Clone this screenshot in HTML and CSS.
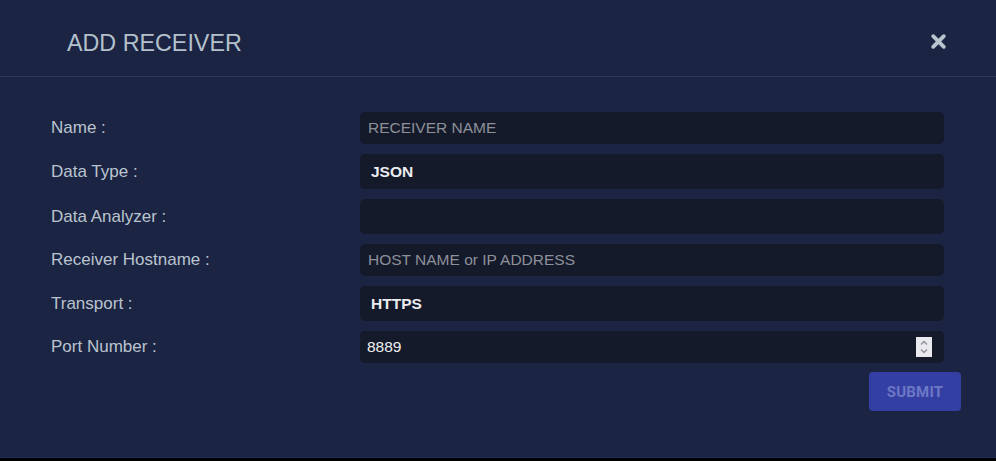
FILE: index.html
```html
<!DOCTYPE html>
<html>
<head>
<meta charset="utf-8">
<link rel="stylesheet" href="styles.css">
</head>
<body>
<div class="modal">
  <header class="modal-header">
    <h1 class="title">ADD RECEIVER</h1>
    <button class="close" aria-label="close">
      <svg width="17" height="17" viewBox="0 0 17 17"><path d="M3.2 3.2 L13.8 13.8 M13.8 3.2 L3.2 13.8" stroke="#b7c5cf" stroke-width="3.8" stroke-linecap="round"/></svg>
    </button>
  </header>
  <div class="modal-body">
    <form class="form">
      <label class="label">Name :</label>
      <div class="field text"><span class="placeholder">RECEIVER NAME</span></div>

      <label class="label">Data Type :</label>
      <div class="field select"><span class="value-bold">JSON</span></div>

      <label class="label">Data Analyzer :</label>
      <div class="field select"></div>

      <label class="label">Receiver Hostname :</label>
      <div class="field text"><span class="placeholder">HOST NAME or IP ADDRESS</span></div>

      <label class="label">Transport :</label>
      <div class="field select"><span class="value-bold">HTTPS</span></div>

      <label class="label">Port Number :</label>
      <div class="field number">
        <span class="value">8889</span>
        <span class="spinner">
          <svg width="16" height="20" viewBox="0 0 16 20"><path d="M5 7.5 L8 4.5 L11 7.5 M5 12.5 L8 15.5 L11 12.5" fill="none" stroke="#8e8f99" stroke-width="1.4"/></svg>
        </span>
      </div>
    </form>
    <div class="actions">
      <button class="submit">SUBMIT</button>
    </div>
  </div>
</div>
</body>
</html>
```
FILE: styles.css
```css
html, body {
  margin: 0;
  padding: 0;
  background: #000;
}
body {
  width: 996px;
  height: 461px;
  overflow: hidden;
  font-family: "Liberation Sans", Arial, sans-serif;
}
.modal {
  height: 458px;
  background: #1c2443;
  border-bottom: 1px solid #232c5a;
  box-sizing: border-box;
}
.modal-header {
  height: 77px;
  box-sizing: border-box;
  border-bottom: 1px solid #2f3859;
  display: flex;
  align-items: center;
  justify-content: space-between;
  padding: 0 49px 0 67px;
}
.title {
  margin: 0;
  font-weight: normal;
  font-size: 23.3px;
  color: #b3c1cd;
  letter-spacing: 0;
  padding-top: 10px;
}
.close {
  background: none;
  border: 0;
  padding: 0;
  width: 17px;
  height: 17px;
  margin-top: 6px;
  cursor: pointer;
}
.close svg { display: block; }
.modal-body {
  padding: 35px 35px 0 51px;
}
.form {
  display: grid;
  grid-template-columns: 309px 584px;
  row-gap: 10px;
  align-items: center;
}
.label {
  font-size: 17px;
  color: #bac4cf;
}
.field {
  background: #151a2b;
  border-radius: 5px;
  display: flex;
  align-items: center;
  box-sizing: border-box;
  font-size: 15.5px;
}
.field.text { height: 32px; padding-left: 8px; }
.field.select { height: 35px; padding-left: 11px; }
.field.number { height: 32px; padding-left: 7px; padding-right: 12px; justify-content: space-between; }
.placeholder { color: #8d9099; }
.value-bold { color: #ececf0; font-weight: bold; }
.value { color: #f0f0f0; }
.spinner {
  width: 16px;
  height: 20px;
  background: #e9e9ee;
  display: block;
}
.spinner svg { display: block; }
.actions {
  display: flex;
  justify-content: flex-end;
  width: 910px;
  margin-top: 9px;
}
.submit {
  width: 92px;
  height: 39px;
  border: 0;
  border-radius: 4px;
  background: #343fa4;
  color: #6d78c5;
  font-family: Roboto, "Liberation Sans", sans-serif;
  font-weight: 700;
  font-size: 15px;
  letter-spacing: 0.2px;
  padding: 0;
}
```
